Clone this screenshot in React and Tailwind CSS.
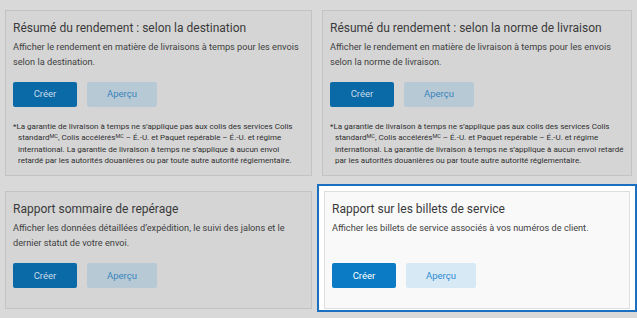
const FOOTNOTE = (
  <>
    *La garantie de livraison à temps ne s’applique pas aux colis des services Colis standard<sup className="text-[5.5px]">MC</sup>, Colis
    accélérés<sup className="text-[5.5px]">MC</sup> – É.-U. et Paquet repérable – É.-U. et régime international. La garantie de
    livraison à temps ne s’applique à aucun envoi retardé par les autorités douanières ou par toute autre autorité
    réglementaire.
  </>
);

const reports = [
  {
    title: "Résumé du rendement : selon la destination",
    text: "Afficher le rendement en matière de livraisons à temps pour les envois selon la destination.",
    note: true,
  },
  {
    title: "Résumé du rendement : selon la norme de livraison",
    text: "Afficher le rendement en matière de livraison à temps pour les envois selon la norme de livraison.",
    note: true,
  },
  {
    title: "Rapport sommaire de repérage",
    text: "Afficher les données détaillées d’expédition, le suivi des jalons et le dernier statut de votre envoi.",
  },
  {
    title: "Rapport sur les billets de service",
    text: "Afficher les billets de service associés à vos numéros de client.",
    selected: true,
  },
];

function ReportCard({ report }) {
  const on = report.selected;
  return (
    <div
      className={`h-full flex flex-col border px-[7px] pt-[8px] ${report.note ? "pb-[9px]" : "pb-[20px]"} ${
        on ? "bg-[#f9f9f9] border-[#dedede]" : "bg-[#d5d5d5] border-[#c3c3c3]"
      }`}
    >
      <h3 className="text-[12px] leading-[18px] text-[#3a3a3a]">{report.title}</h3>
      <p className="mt-[3px] min-h-[29px] text-[9.2px] leading-[14.5px] text-[#3f3f3f]">{report.text}</p>
      <div className="mt-[13px] flex gap-[10px]">
        <button
          className={`w-[64px] h-[25px] rounded-[2px] text-[9.5px] ${
            on ? "bg-[#0a7bc4] text-white" : "bg-[#0a69a7] text-[#c9dbe7]"
          }`}
        >
          Créer
        </button>
        <button
          className={`w-[70px] h-[25px] rounded-[2px] text-[9.5px] ${
            on ? "bg-[#d8e9f6] text-[#2c8ad0]" : "bg-[#b7c9d5] text-[#3985bb]"
          }`}
        >
          Aperçu
        </button>
      </div>
      {report.note && (
        <p className="mt-[14px] pl-[5px] -indent-[5px] text-[8px] leading-[11.3px] text-[#2f2f2f]">{FOOTNOTE}</p>
      )}
    </div>
  );
}

export default function App() {
  return (
    <div
      className="w-[637px] h-[318px] bg-[#d9d9d9] pt-[3px] overflow-hidden"
      style={{ fontFamily: "Roboto, 'Liberation Sans', sans-serif" }}
    >
      <div className="grid grid-cols-[317px_320px] gap-y-[5px]">
        {reports.map((r) => (
          <div
            key={r.title}
            className={
              r.selected
                ? "border-2 border-[#1a6fc0] bg-white px-[5px] pt-[5px] pb-[1px]"
                : "px-[5px] pt-[7px] pb-[3px]"
            }
          >
            <ReportCard report={r} />
          </div>
        ))}
      </div>
    </div>
  );
}
